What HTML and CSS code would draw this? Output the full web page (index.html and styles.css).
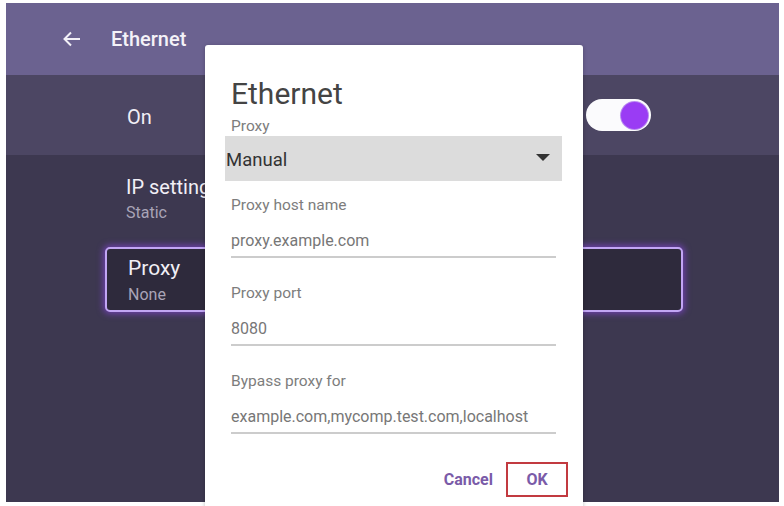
FILE: index.html
```html
<!DOCTYPE html>
<html>
<head>
  <title>Ethernet</title>
  <meta name="viewport" content="width=device-width, initial-scale=1.0">
  <link rel="stylesheet" href="styles.css">
</head>
<body>

  <div class="screen">
    <header class="topbar">
      <svg class="back" width="18" height="16" viewBox="0 0 18 16">
        <path d="M17 8H2M8 1.5L1.5 8L8 14.5" fill="none" stroke="#f2f0f7" stroke-width="2"/>
      </svg>
      <span class="topbar-title">Ethernet</span>
    </header>

    <div class="row row-on">
      <span class="row-title">On</span>
      <div class="toggle"><div class="knob"></div></div>
    </div>

    <div class="list">
      <div class="item">
        <div class="row-title">IP settings</div>
        <div class="row-sub">Static</div>
      </div>
      <div class="item item-focus">
        <div class="row-title">Proxy</div>
        <div class="row-sub">None</div>
      </div>
    </div>

    <div class="dialog">
      <h1>Ethernet</h1>
      <div class="label label-first">Proxy</div>
      <div class="select">
        <span>Manual</span>
        <span class="caret"></span>
      </div>

      <div class="label">Proxy host name</div>
      <div class="field">proxy.example.com</div>

      <div class="label">Proxy port</div>
      <div class="field">8080</div>

      <div class="label">Bypass proxy for</div>
      <div class="field">example.com,mycomp.test.com,localhost</div>

      <div class="actions">
        <span class="btn">Cancel</span>
        <span class="btn btn-ok">OK</span>
      </div>
    </div>
  </div>

</body>
</html>
```

FILE: styles.css
```css
* {
  margin: 0;
  padding: 0;
  box-sizing: border-box;
}

html, body {
  height: 100%;
  background: #ffffff;
  font-family: Roboto, "Noto Sans", sans-serif;
  overflow: hidden;
}

.screen {
  position: relative;
  margin: 3px 0 0 6px;
  width: 773px;
  height: 499px;
  background: #3d3850;
  display: flex;
  flex-direction: column;
}

.topbar {
  height: 72px;
  background: #6b6290;
  display: flex;
  align-items: center;
  padding-left: 57px;
  color: #f4f2f8;
}

.back {
  margin-right: 30px;
}

.topbar-title {
  font-size: 20px;
  font-weight: 500;
}

.row-on {
  height: 80px;
  background: #4c4663;
  display: flex;
  align-items: center;
  padding-left: 121px;
  padding-right: 128px;
  padding-top: 4px;
}

.row-title {
  font-size: 20px;
  line-height: 25px;
  color: #f1eff6;
}

.row-sub {
  font-size: 16px;
  line-height: 20px;
  color: #a9a4b7;
  margin-top: 3px;
}

.toggle {
  margin-left: auto;
  margin-top: -4px;
  width: 65px;
  height: 32px;
  border-radius: 16px;
  background: #fbfbfd;
  display: flex;
  align-items: center;
  justify-content: flex-end;
  padding-right: 3px;
}

.knob {
  width: 27px;
  height: 27px;
  border-radius: 50%;
  background: #9a3cf4;
  box-shadow: 0 0 0 1px #b98af0;
}

.list {
  display: flex;
  flex-direction: column;
  gap: 24px;
  padding-top: 20px;
  padding-left: 99px;
}

.item {
  width: 578px;
  padding: 0 0 0 21px;
}

.item-focus {
  height: 65px;
  padding-top: 7px;
  background: #2e2a3c;
  border: 2px solid #c2a6f4;
  border-radius: 5px;
  box-shadow: 0 0 6px 2px rgba(140, 70, 230, 0.6);
}

.item-focus .row-title {
  font-size: 21px;
}

.item-focus .row-sub {
  margin-top: 4px;
}

/* dialog sits on top of the list */
.dialog {
  position: absolute;
  left: 199px;
  top: 42px;
  width: 378px;
  height: 470px;
  background: #ffffff;
  border-radius: 3px 3px 0 0;
  padding: 34px 21px 0 20px;
  box-shadow: 0 1px 4px rgba(0, 0, 0, 0.25);
}

.dialog h1 {
  font-weight: normal;
  font-size: 30px;
  line-height: 30px;
  color: #444444;
  padding-left: 6px;
}

.label {
  font-size: 15.5px;
  line-height: 18px;
  color: #7d7d7d;
  margin-top: 26px;
  padding-left: 6px;
}

.label-first {
  margin-top: 8px;
}

.select + .label {
  margin-top: 15px;
}

.select {
  margin-top: 1px;
  height: 45px;
  background: #dcdcdc;
  display: flex;
  align-items: center;
  justify-content: space-between;
  padding: 2px 12px 0 1px;
  font-size: 18.5px;
  color: #333333;
}

.caret {
  width: 0;
  height: 0;
  border-left: 7px solid transparent;
  border-right: 7px solid transparent;
  border-top: 7px solid #333333;
  margin-top: -4px;
}

.field {
  margin: 17px 6px 0 6px;
  padding-bottom: 5px;
  border-bottom: 2px solid #cccccc;
  font-size: 16px;
  line-height: 20px;
  color: #777777;
}

.actions {
  display: flex;
  justify-content: flex-end;
  align-items: center;
  gap: 13px;
  margin-top: 28px;
  margin-right: -6px;
}

.btn {
  font-size: 16px;
  font-weight: bold;
  color: #7a5ba8;
}

.btn-ok {
  width: 62px;
  height: 35px;
  border: 2px solid #c23a40;
  display: flex;
  align-items: center;
  justify-content: center;
}
```
